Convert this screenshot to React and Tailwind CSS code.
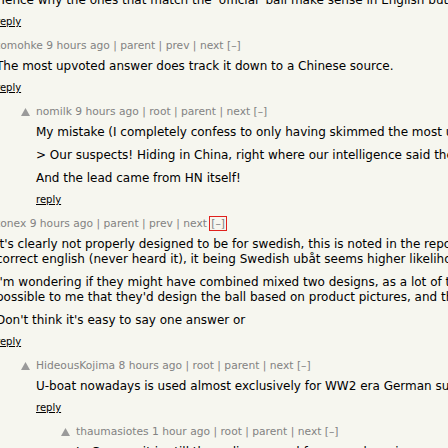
import React from "react";

// thread data: each comment body is a list of paragraphs, each paragraph a list of already-wrapped lines
const comments = [
  {
    level: 0,
    user: "tomohke",
    age: "9 hours ago",
    links: ["parent", "prev", "next"],
    body: [["The most upvoted answer does track it down to a Chinese source."]],
  },
  {
    level: 1,
    user: "nomilk",
    age: "9 hours ago",
    links: ["root", "parent", "next"],
    body: [
      ["My mistake (I completely confess to only having skimmed the most upvoted answer)."],
      ["> Our suspects! Hiding in China, right where our intelligence said they would be."],
      ["And the lead came from HN itself!"],
    ],
  },
  {
    level: 0,
    user: "tonex",
    age: "9 hours ago",
    links: ["parent", "prev", "next"],
    focused: true,
    body: [
      [
        "It's clearly not properly designed to be for swedish, this is noted in the report. Unless it's",
        "correct english (never heard it), it being Swedish ubåt seems higher likelihood.",
      ],
      [
        "I'm wondering if they might have combined mixed two designs, as a lot of things",
        "possible to me that they'd design the ball based on product pictures, and then",
      ],
      ["Don't think it's easy to say one answer or"],
    ],
  },
  {
    level: 1,
    user: "HideousKojima",
    age: "8 hours ago",
    links: ["root", "parent", "next"],
    body: [["U-boat nowadays is used almost exclusively for WW2 era German submarines."]],
  },
  {
    level: 2,
    user: "thaumasiotes",
    age: "1 hour ago",
    links: ["root", "parent", "next"],
    body: [["In German it is still the ordinary word for any submarine."]],
  },
];

const indent = ["pl-0", "pl-10", "pl-20"];

function VoteArrow() {
  return (
    <svg width="9" height="8" viewBox="0 0 9 8" className="block">
      <polygon points="4.5,0 9,8 0,8" fill="#9a9a9a" />
    </svg>
  );
}

function Reply() {
  return (
    <div className="mt-[8px] h-[12px] text-[10px] leading-[12px] text-black">
      <span className="underline underline-offset-[1px]">reply</span>
    </div>
  );
}

function Body({ paragraphs }) {
  return (
    <div className="flex flex-col gap-[8px] text-[12px] leading-[15px] text-black">
      {paragraphs.map((lines, i) => (
        <div key={i}>
          {lines.map((line, j) => (
            <div key={j} className="whitespace-nowrap">
              {line}
            </div>
          ))}
        </div>
      ))}
    </div>
  );
}

function Comment({ c }) {
  return (
    <div className={indent[c.level]}>
      <div className="flex items-center h-[14px] -ml-[15px] text-[10.7px] leading-[14px] text-[#828282] whitespace-nowrap">
        <span className="w-[15px] shrink-0 flex items-center">
          {c.level > 0 && <VoteArrow />}
        </span>
        <span>
          {c.user} {c.age}
          {c.links.map((l) => (
            <span key={l}> | {l}</span>
          ))}{" "}
          {c.focused ? (
            <span className="outline outline-1 outline-[#e0201c] px-[1px]">[–]</span>
          ) : (
            <span>[–]</span>
          )}
        </span>
      </div>
      <div className="mt-[6px]">
        <Body paragraphs={c.body} />
      </div>
      <Reply />
    </div>
  );
}

export default function App() {
  return (
    <div className="w-[448px] h-[448px] overflow-hidden bg-[#f6f6ef] font-['DejaVu_Sans',Verdana,sans-serif]">
      <div className="-ml-[4px] -mt-[7px] flex flex-col gap-[11px]">
        {/* tail of the comment above the view */}
        <div>
          <Body
            paragraphs={[
              ["Hence why the ones that match the 'official' ball make sense in English but not in Swedish."],
            ]}
          />
          <Reply />
        </div>
        {comments.map((c, i) => (
          <Comment key={i} c={c} />
        ))}
      </div>
    </div>
  );
}
